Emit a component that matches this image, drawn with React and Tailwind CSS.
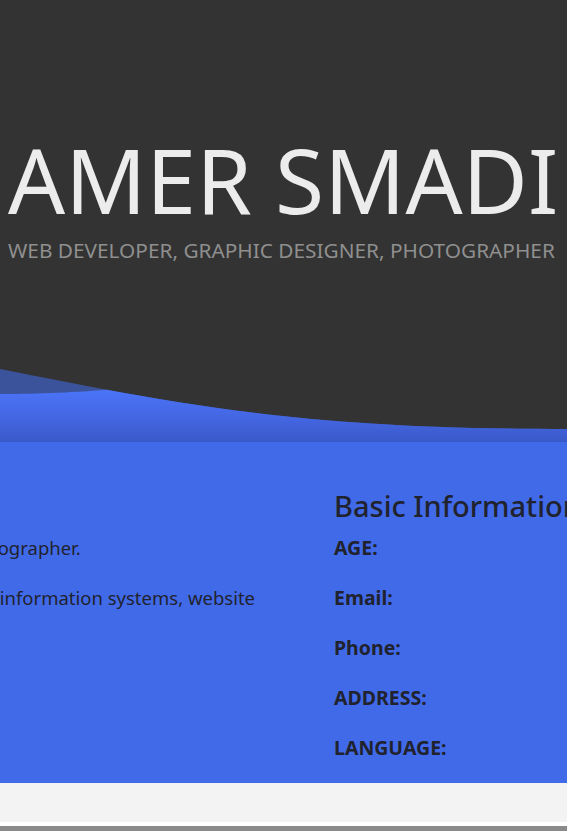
export default function App() {
  const font = { fontFamily: '"Noto Sans", "Open Sans", sans-serif' };
  return (
    <div className="w-[567px] overflow-hidden bg-white" style={font}>
      {/* Header */}
      <header className="flex h-[442px] flex-col bg-[#333333]">
        <div className="flex flex-col pl-[8px] pt-[118px]">
          <h1 className="whitespace-nowrap text-[89.5px] leading-[122px] font-normal text-[#ececec]">
            AMER SMADI
          </h1>
          <p className="whitespace-nowrap text-[20.8px] leading-[20px] text-[#8f8f8f]">
            WEB DEVELOPER, GRAPHIC DESIGNER, PHOTOGRAPHER
          </p>
        </div>
        <svg
          className="mt-auto block"
          width="567"
          height="80"
          viewBox="0 0 567 80"
          preserveAspectRatio="none"
        >
          <defs>
            <linearGradient id="wg" x1="0" y1="0" x2="0" y2="1">
              <stop offset="0" stopColor="#4b74f7" />
              <stop offset="0.45" stopColor="#4568e6" />
              <stop offset="1" stopColor="#3a59c9" />
            </linearGradient>
          </defs>
          <path
            d="M0,7 C200,47 317,67 567,67 L567,80 L0,80 Z"
            fill="#4169e1"
            fillOpacity="0.6"
          />
          <path
            d="M0,32 C40,32 80,30 106.5,27.7 C249.2,53.9 364.5,67 567,67 L567,80 L0,80 Z"
            fill="url(#wg)"
          />
        </svg>
      </header>

      {/* Main blue section */}
      <section className="h-[341px] bg-[#416ae9] text-[#20232e]">
        <div className="ml-[-344px] flex w-[911px] pt-[44px]">
          <div className="w-[678px] shrink-0">
            <h2 className="text-[29px] leading-[40px] font-medium">About Me</h2>
            <p className="mt-[10px] whitespace-nowrap text-[18.5px] leading-[24px]">
              I'm a web developer, designer and photographer.
            </p>
            <p className="mt-[26px] whitespace-nowrap text-[18.5px] leading-[24px]">
              I have a bachelor's degree in computer information systems, website
            </p>
          </div>
          <div className="flex flex-col">
            <h2 className="whitespace-nowrap text-[29px] leading-[40px] font-medium">
              Basic Information
            </h2>
            <ul className="mt-[10px] flex flex-col gap-[26px] text-[19.5px] leading-[24px] font-bold">
              <li>AGE:</li>
              <li>Email:</li>
              <li>Phone:</li>
              <li>ADDRESS:</li>
              <li>LANGUAGE:</li>
            </ul>
          </div>
        </div>
      </section>

      {/* Footer */}
      <div className="h-[39px] bg-[#f3f3f3]" />
      <div className="h-[4px] bg-white" />
      <div className="h-[40px] bg-[#8a8a8a]" />
    </div>
  );
}
